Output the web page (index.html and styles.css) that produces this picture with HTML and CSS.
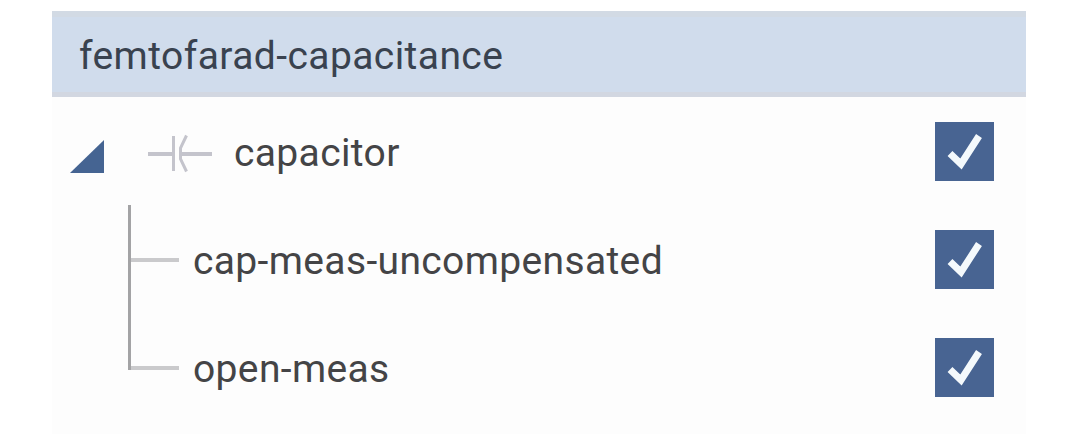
FILE: index.html
```
<!DOCTYPE html>
<html lang="en">
<head>
    <meta charset="UTF-8">
    <meta name="viewport" content="width=device-width, initial-scale=1.0">
    <title>femtofarad-capacitance</title>
    <link rel="stylesheet" href="styles.css">
</head>
<body>
    <div class="panel">
        <div class="panel-header"><span class="title">femtofarad-capacitance</span></div>

        <div class="row">
            <svg class="expander" width="36" height="34" viewBox="0 0 36 34">
                <path d="M0 33 L34 0 V33 Z" fill="#456492"/>
            </svg>
            <svg class="capacitor-icon" width="64" height="40" viewBox="0 0 64 40" fill="none" stroke="#c4c4cc">
                <path d="M0 20 H25 M33 20 H64" stroke-width="4"/>
                <path d="M25.5 2 V37" stroke-width="3"/>
                <path d="M38.5 1.5 L32.5 14 V25 L38.5 37.5" stroke-width="3"/>
            </svg>
            <span class="label">capacitor</span>
            <span class="checkbox">
                <svg width="59" height="59" viewBox="0 0 59 59"><path d="M15 31.5 L26 42 L44 14" /></svg>
            </span>
        </div>

        <div class="row child">
            <span class="branch"></span>
            <span class="label">cap-meas-uncompensated</span>
            <span class="checkbox">
                <svg width="59" height="59" viewBox="0 0 59 59"><path d="M15 31.5 L26 42 L44 14" /></svg>
            </span>
        </div>

        <div class="row child last">
            <span class="branch"></span>
            <span class="label">open-meas</span>
            <span class="checkbox">
                <svg width="59" height="59" viewBox="0 0 59 59"><path d="M15 31.5 L26 42 L44 14" /></svg>
            </span>
        </div>
    </div>
</body>
</html>
```
FILE: styles.css
```
* {
    margin: 0;
    padding: 0;
    box-sizing: border-box;
}

body {
    background: #fff;
    font-family: Roboto, sans-serif;
    font-size: 39px;
    letter-spacing: 0.36px;
    color: #444446;
    overflow: hidden;
}

.panel {
    width: 974px;
    height: 423px;
    margin: 11px 0 0 52px;
    background: #fdfdfd;
}

.panel-header {
    display: flex;
    align-items: center;
    height: 86px;
    padding: 3px 0 0 27px;
    background: #d0dcec;
    border-top: 6px solid #d2dae4;
    border-bottom: 5px solid #d2d7e1;
    color: #39424f;
    line-height: 46px;
    letter-spacing: 0.42px;
}

.row {
    display: flex;
    align-items: center;
    height: 108px;
    padding: 1px 32px 0 18px;
}

.label {
    padding-top: 2px;
    line-height: 46px;
    white-space: nowrap;
}

/* Triangle and capacitor symbol */
.expander {
    margin-top: 10px;
}

.capacitor-icon {
    margin: 4px 22px 0 42px;
}

/* Tree lines */
.child {
    padding-left: 76px;
}

.branch {
    align-self: stretch;
    width: 51px;
    margin: -1px 14px 0 0;
    border-left: 3px solid #a3a3a5;
    background: linear-gradient(#cacacc, #cacacc) 0 53px / 48px 4px no-repeat;
}

.last .branch {
    height: 57px;
    align-self: flex-start;
}

/* Checkboxes */
.checkbox {
    width: 59px;
    height: 59px;
    margin-left: auto;
    background: #486492;
}

.checkbox svg {
    display: block;
    fill: none;
    stroke: #f4f9fc;
    stroke-width: 7;
}
```
